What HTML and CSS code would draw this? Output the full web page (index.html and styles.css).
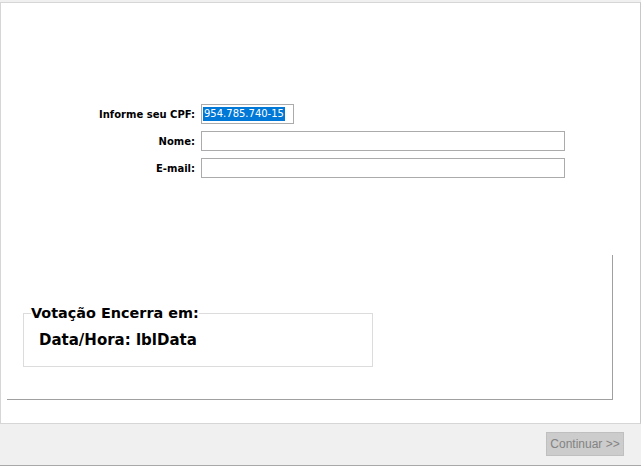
FILE: index.html
```html
<!DOCTYPE html>
<html lang="pt-BR">
<head>
<meta charset="utf-8">
<title>Votação</title>
<link rel="stylesheet" href="styles.css">
</head>
<body>
<div class="window">
  <div class="panel">
    <div class="top">
      <div class="form">
        <label class="lbl">Informe seu CPF:</label>
        <div class="field field-cpf"><span class="sel">954.785.740-15</span></div>
        <label class="lbl">Nome:</label>
        <div class="field"></div>
        <label class="lbl">E-mail:</label>
        <div class="field"></div>
      </div>
    </div>
    <div class="frame">
      <fieldset class="group">
        <legend class="legend">Votação Encerra em:</legend>
        <div class="date">Data/Hora: lblData</div>
      </fieldset>
    </div>
  </div>
  <div class="footer">
    <button class="btn" disabled>Continuar &gt;&gt;</button>
  </div>
</div>
</body>
</html>
```
FILE: styles.css
```css
html, body {
  margin: 0;
  padding: 0;
}
body {
  background: #f0f0f0;
  width: 641px;
  height: 466px;
  overflow: hidden;
  font-family: "DejaVu Sans", sans-serif;
}
.window {
  padding-top: 2px;
}
.panel {
  box-sizing: border-box;
  height: 422px;
  width: 641px;
  background: #ffffff;
  border: 1px solid #d6d6d6;
  border-right-color: #c8c8c8;
}
.top {
  height: 252px;
}
.form {
  padding-top: 101px;
  display: grid;
  grid-template-columns: 194px 364px;
  grid-auto-rows: 20px;
  column-gap: 6px;
  row-gap: 7px;
  align-items: center;
}
.lbl {
  justify-self: end;
  font-weight: bold;
  font-size: 10px;
  color: #000;
}
.field {
  box-sizing: border-box;
  height: 20px;
  border: 1px solid #ababab;
  background: #fff;
  display: flex;
  align-items: center;
  padding-left: 1px;
}
.field-cpf {
  width: 93px;
}
.sel {
  background: #0078d7;
  color: #fff;
  font-size: 10px;
  line-height: 14px;
  padding: 0 1px;
}
.frame {
  box-sizing: border-box;
  margin-left: 6px;
  width: 606px;
  height: 145px;
  border-right: 1px solid #a0a0a0;
  border-bottom: 1px solid #a0a0a0;
  padding-top: 50px;
  padding-left: 16px;
}
.group {
  box-sizing: border-box;
  margin: 0;
  width: 350px;
  height: 62px;
  padding: 0 0 0 7px;
  border: 1px solid #dcdcdc;
}
.legend {
  padding: 0;
  font-weight: bold;
  font-size: 14.4px;
  line-height: 17px;
  color: #000;
}
.date {
  margin-left: 8px;
  margin-top: 10px;
  font-weight: bold;
  font-size: 15px;
  line-height: 17px;
  color: #000;
}
.footer {
  box-sizing: border-box;
  height: 42px;
  border-bottom: 1px solid #a8a8a8;
  display: flex;
  justify-content: flex-end;
  align-items: flex-start;
  padding-top: 8px;
  padding-right: 17px;
}
.btn {
  box-sizing: border-box;
  width: 78px;
  height: 24px;
  margin: 0;
  padding: 0;
  background: #cccccc;
  border: 1px solid #bfbfbf;
  color: #838383;
  font-family: "Liberation Sans", sans-serif;
  font-size: 12px;
}
```
